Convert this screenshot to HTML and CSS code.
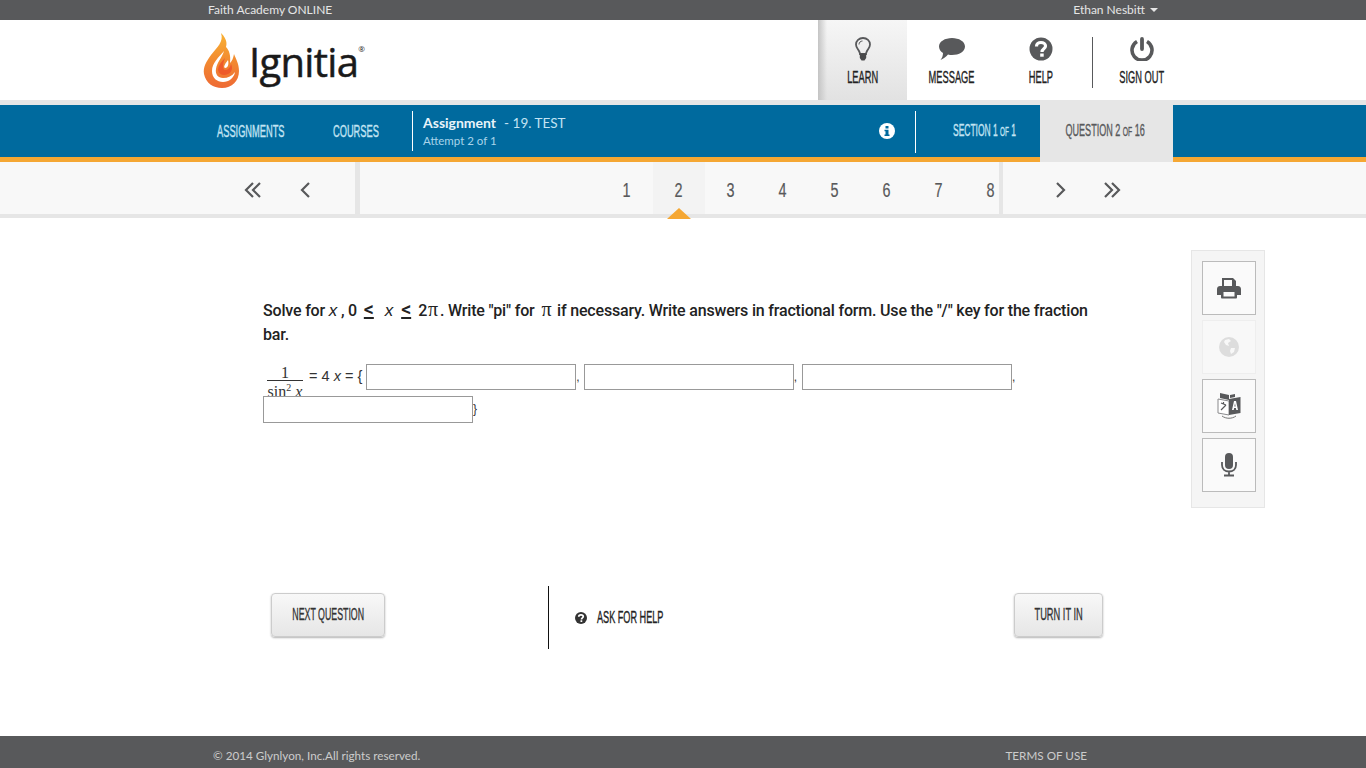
FILE: index.html
```html
<!DOCTYPE html>
<html lang="en">
<head>
<meta charset="utf-8">
<title>Ignitia</title>
<link rel="stylesheet" href="styles.css">
</head>
<body>
<div class="topbar">
  <span>Faith Academy ONLINE</span>
  <span class="user">Ethan Nesbitt <i class="caret"></i></span>
</div>
<header class="header">
  <div class="logo">
    <svg class="flame" width="37" height="56" viewBox="0 0 37 56">
      <defs>
        <linearGradient id="fl" x1="0" y1="0" x2="0" y2="1">
          <stop offset="0" stop-color="#f9b233"/>
          <stop offset=".5" stop-color="#f28a30"/>
          <stop offset="1" stop-color="#ee6a35"/>
        </linearGradient>
      </defs>
      <path fill="url(#fl)" d="M18 0C21 9 14 14 8 22C3 29 0 34 1 41C3 50 10 55 19 55C29 55 36 48 36 38C36 31 33 26 31 21C30 26 29 28 27 30C28 22 26 17 23 14C25 8 21 3 18 0Z"/>
      <path fill="#fff" d="M21 18C16 24 9 30 9 38C9 45 14 49 20 49C26 49 31 45 32 39C29 43 25 45 20 45C15 45 12 41 13 36C14 29 19 25 21 18Z"/>
      <path fill="#ee5a2b" d="M22 25C18 29 15 33 15 37C16 42 21 43 25 41C29 39 30 35 28 31C27 35 25 37 22 37C19 36 20 30 22 25Z"/>
      <path fill="#fff" d="M25 27C22 31 20 34 22 35C25 35 26 31 25 27Z"/>
    </svg>
    <span class="wordmark">Ignitia<sup>®</sup></span>
  </div>
  <nav class="mainnav">
    <a class="navitem active">
      <svg width="16" height="24" viewBox="0 0 16 24"><path fill="none" stroke="#58595b" stroke-width="1.800" d="M8 1C4 1 1 4 1 7.500C1 10.500 3 12 4 14C4.500 15 5 16 5 17H11C11 16 11.500 15 12 14C13 12 15 10.500 15 7.500C15 4 12 1 8 1Z"/><path fill="none" stroke="#58595b" d="M4 7.500C4 5.500 5.500 4 7.500 4"/><path fill="#4a4a4c" d="M4.800 16.500H11.200V21L9.500 23.500H6.500L4.800 21Z"/></svg>
      <span class="cn">LEARN</span>
    </a>
    <a class="navitem">
      <svg width="28" height="24" viewBox="0 0 28 24"><path fill="#58595b" d="M14 1C21 1 27 4.500 27 9.500C27 14.500 21 18 14 18C12.500 18 11.500 18 10 17.500C8 20 5 22 2.500 23C4 21 5 19 5 16C2.500 14.500 1 12 1 9.500C1 4.500 7 1 14 1Z"/></svg>
      <span class="cn">MESSAGE</span>
    </a>
    <a class="navitem">
      <svg width="24" height="24" viewBox="0 0 24 24"><circle cx="12" cy="12" r="11.500" fill="#58595b"/><path fill="none" stroke="#fff" stroke-width="3.200" d="M7.500 9.500C7.500 7 9.500 5.500 12 5.500C14.500 5.500 16.500 7 16.500 9C16.500 12 13 11.500 13 15"/><rect x="11.200" y="16.500" width="3.500" height="3.200" fill="#fff"/></svg>
      <span class="cn">HELP</span>
    </a>
    <a class="navitem signout">
      <svg width="24" height="24" viewBox="0 0 24 24"><path fill="none" stroke="#58595b" stroke-width="3.600" d="M7 4.500A10 10 0 1 0 17 4.500"/><path stroke="#58595b" stroke-width="3.800" stroke-linecap="round" d="M12 2V12"/></svg>
      <span class="cn">SIGN OUT</span>
    </a>
  </nav>
</header>
<div class="bluebar">
  <a class="bluelink first"><span class="cn left">ASSIGNMENTS</span></a>
  <a class="bluelink second"><span class="cn left">COURSES</span></a>
  <div class="assignment">
    <div class="a-title"><b>Assignment</b><span>- 19. TEST</span></div>
    <div class="a-sub">Attempt 2 of 1</div>
  </div>
  <svg class="infoicon" width="16" height="16" viewBox="0 0 16 16"><circle cx="8" cy="8" r="8" fill="#fff"/><rect x="6.500" y="3" width="3" height="2.500" fill="#006a9e"/><path fill="#006a9e" d="M5.500 6.800H9.500V11.500H10.500V13H5.500V11.500H6.500V8.300H5.500Z"/></svg>
  <div class="section"><span class="cn left">SECTION 1 <small>OF</small> 1</span></div>
  <div class="qtab"><span class="cn">QUESTION 2 <small>OF</small> 16</span></div>
</div>
<div class="pager">
  <div class="pager-left">
    <svg class="chev" width="18" height="16" viewBox="0 0 18 16"><path fill="none" stroke="#58595b" stroke-width="2.200" d="M9 1L2 8L9 15M16 1L9 8L16 15"/></svg>
    <svg class="chev" width="10" height="16" viewBox="0 0 10 16"><path fill="none" stroke="#58595b" stroke-width="2.200" d="M9 1L2 8L9 15"/></svg>
  </div>
  <div class="pager-nums">
    <a><span class="cn">1</span></a><a class="current"><span class="cn">2</span></a><a><span class="cn">3</span></a><a><span class="cn">4</span></a><a><span class="cn">5</span></a><a><span class="cn">6</span></a><a><span class="cn">7</span></a><a><span class="cn">8</span></a>
  </div>
  <div class="pager-right">
    <svg class="chev" width="10" height="16" viewBox="0 0 10 16"><path fill="none" stroke="#58595b" stroke-width="2.200" d="M1 1L8 8L1 15"/></svg>
    <svg class="chev" width="18" height="16" viewBox="0 0 18 16"><path fill="none" stroke="#58595b" stroke-width="2.200" d="M2 1L9 8L2 15M9 1L16 8L9 15"/></svg>
  </div>
</div>
<main class="main">
  <section class="question">
    <p class="prompt">Solve for <i class="mx">x</i> , 0 <u class="le">&lt;</u><i class="mx gap">x</i><u class="le">&lt;</u><span class="two">2</span><span class="m pi1">π</span>. Write "pi" for <span class="m pi2">π</span> if necessary. Write answers in fractional form. Use the "/" key for the fraction<br>bar.</p>
    <div class="answer">
      <span class="frac"><span class="num">1</span><span class="den">sin<sup>2</sup> <i>x</i></span></span>
      <span class="eq">= 4 <i>x</i> = {</span>
      <input class="box" type="text"><span class="sep">,</span>
      <input class="box" type="text"><span class="sep wide">,</span>
      <input class="box" type="text"><span class="sep">,</span>
      <input class="box last" type="text"><span class="sep">}</span>
    </div>
    <div class="actions">
      <a class="btn next"><span class="cn">NEXT QUESTION</span></a>
      <div class="helpwrap">
        <svg width="12" height="12" viewBox="0 0 24 24"><circle cx="12" cy="12" r="12" fill="#333"/><path fill="none" stroke="#fff" stroke-width="3.500" d="M7.500 9.500C7.500 7 9.500 5.500 12 5.500C14.500 5.500 16.500 7 16.500 9C16.500 12 13 11.500 13 15"/><rect x="11" y="16.500" width="3.500" height="3.500" fill="#fff"/></svg>
        <span class="cn left">ASK FOR HELP</span>
      </div>
      <a class="btn turnin"><span class="cn">TURN IT IN</span></a>
    </div>
  </section>
  <aside class="tools">
    <a class="tool">
      <svg width="24" height="22" viewBox="0 0 24 22"><path fill="#58595b" d="M5 1H16L19 4V9H5Z"/><path fill="#58595b" d="M3 9H21C22.500 9 24 10 24 12V18H20V20.500C20 21 19.500 21.500 19 21.500H5C4.500 21.500 4 21 4 20.500V18H0V12C0 10 1.500 9 3 9Z"/><rect x="7" y="3" width="8" height="6" fill="#fafafa"/><rect x="6.500" y="15" width="11" height="4.500" fill="#fafafa"/></svg>
    </a>
    <a class="tool off">
      <svg width="20" height="20" viewBox="0 0 20 20"><circle cx="10" cy="10" r="10" fill="#ddd"/><path fill="#f8f8f8" d="M6 3L10 2L12 4L9 6L10 9L7 8L5 5ZM12 11L16 11L15 15L12 17L11 14Z"/></svg>
    </a>
    <a class="tool">
      <svg width="24" height="28" viewBox="0 0 24 28"><path fill="#fff" stroke="#8a8a8c" d="M1 7L12 9V23L1 21Z"/><path fill="#58595b" d="M12 7L23.500 5V21L12 23Z"/><path fill="#58595b" d="M3 1L12 3V8L3 6Z"/><path fill="#58595b" d="M13 3L18 2V5L13 6Z"/><path fill="#fff" d="M15 18L17 9H19L21 18H19.300L18.900 16H17.100L16.700 18ZM17.400 14.600H18.600L18 11.200Z"/><path fill="none" stroke="#58595b" stroke-width="1.200" d="M4 11L9 13M6.500 10V12.500M4 18L9 13"/><path fill="none" stroke="#777" d="M5 24C9 27 15 27 19 24"/></svg>
    </a>
    <a class="tool">
      <svg width="16" height="24" viewBox="0 0 16 24"><rect x="4" y="0" width="8" height="16" rx="4" fill="#58595b"/><path fill="none" stroke="#58595b" stroke-width="1.800" d="M1 9V12C1 16 4 18.500 8 18.500C12 18.500 15 16 15 12V9M8 18.500V22"/><rect x="3" y="21.500" width="10" height="2" fill="#58595b"/></svg>
    </a>
  </aside>
</main>
<footer class="footer">
  <span>© 2014 Glynlyon, Inc.All rights reserved.</span>
  <span class="terms">TERMS OF USE</span>
</footer>
</body>
</html>
```
FILE: styles.css
```css
* { box-sizing: border-box; }
html, body { height: 100%; }
body {
  margin: 0;
  height: 768px;
  overflow: hidden;
  display: flex;
  flex-direction: column;
  background: #fff;
  font-family: "Lato", "Liberation Sans", sans-serif;
  color: #222;
}
.cn {
  display: inline-block;
  flex: none;
  white-space: nowrap;
  font-family: "Liberation Sans", sans-serif;
  font-weight: 400;
  font-size: 16px;
  line-height: 18px;
  -webkit-text-stroke: .35px currentColor;
  transform: scaleX(.58);
  transform-origin: center;
}
.cn.left { transform-origin: left; }
.cn small { font-size: 12px; }
.topbar {
  flex: none;
  height: 20px;
  background: #58595b;
  color: #e6e6e6;
  font-size: 12px;
  line-height: 20px;
  padding: 0 208px;
  display: flex;
  justify-content: space-between;
}
.caret {
  display: inline-block;
  width: 0;
  height: 0;
  margin-left: 2px;
  vertical-align: 2px;
  border: 4px solid transparent;
  border-top-color: #e6e6e6;
  border-bottom: 0;
}
.header {
  flex: none;
  height: 85px;
  display: flex;
  justify-content: space-between;
  border-bottom: 5px solid #e6e6e6;
  padding: 0 176px 0 203px;
}
.logo { display: flex; align-items: flex-start; padding-top: 13px; }
.wordmark {
  font-family: "Open Sans", sans-serif;
  font-size: 40px;
  line-height: 56px;
  margin: 1px 0 0 9px;
  letter-spacing: -.7px;
  color: #1a1a1a;
  -webkit-text-stroke: .5px #1a1a1a;
}
.wordmark sup {
  font-size: 8px;
  vertical-align: 25px;
  line-height: 0;
  letter-spacing: 0;
  margin-left: 0;
  -webkit-text-stroke: 0;
}
.mainnav { display: flex; }
.navitem {
  width: 89px;
  height: 80px;
  display: flex;
  flex-direction: column;
  align-items: center;
  padding-top: 17px;
  color: #222;
}
.navitem svg { height: 24px; flex: none; }
.navitem .cn { margin-top: 8px; }
.navitem.active {
  background:
    linear-gradient(90deg, #c4c4c4 0, rgba(238,238,238,0) 9px),
    linear-gradient(180deg, #f6f6f6 0, #e2e2e2 100%);
}
.navitem.signout { position: relative; width: 97px; margin-left: 8px; }
.navitem.signout::before {
  content: "";
  position: absolute;
  left: -1px;
  top: 17px;
  height: 51px;
  width: 1px;
  background: #58595b;
}
.bluebar {
  flex: none;
  height: 57px;
  background: #006a9e;
  border-bottom: 5px solid #f5a733;
  display: flex;
  align-items: flex-start;
  color: #c3e4f3;
  padding-left: 217px;
}
.bluelink { line-height: 18px; padding-top: 17px; }
.first { width: 116px; }
.second { width: 79px; }
.assignment {
  margin: 6px 0 0;
  padding-left: 10px;
  height: 40px;
  width: 467px;
  border-left: 1px solid #fff;
  font-size: 13.500px;
}
.a-title { line-height: 24px; }
.a-title b { color: #e8f4fa; margin-right: 8px; font-size: 14px; }
.a-sub { font-size: 11.500px; line-height: 12px; color: #a8d4ea; }
.infoicon { margin-top: 18px; flex: none; }
.section {
  width: 125px;
  flex: none;
  margin: 6px 0 0 20px;
  height: 42px;
  border-left: 1px solid #fff;
  padding: 9px 0 0 37px;
  white-space: nowrap;
}
.section .cn { transform: scaleX(.53); }
.qtab {
  width: 133px;
  flex: none;
  height: 57px;
  background: #e6e6e6;
  color: #58595b;
  display: flex;
  justify-content: center;
  padding: 17px 3px 0 0;
}
.qtab .cn { transform: scaleX(.565); }
.pager {
  flex: none;
  height: 56px;
  background: #f8f8f8;
  border-bottom: 4px solid #e6e6e6;
  display: flex;
  color: #58595b;
}
.pager-left {
  width: 355px;
  display: flex;
  align-items: center;
  justify-content: flex-end;
  gap: 38px;
  padding: 4px 45px 0 0;
}
.pager-nums {
  width: 639px;
  display: flex;
  justify-content: flex-end;
  margin-left: 5px;
  background: #f8f8f8;
  box-shadow: -5px 0 0 #e6e6e6, 4px 0 0 #e6e6e6;
  position: relative;
}
.pager-nums a {
  flex: none;
  width: 52px;
  height: 52px;
  display: flex;
  justify-content: center;
  align-items: center;
  padding-top: 4px;
}
.pager-nums .cn { font-size: 20px; line-height: 24px; transform: scaleX(.72); -webkit-text-stroke: .2px currentColor; }
.pager-nums a:last-child { margin-right: -18px; }
.pager-nums a.current { background: #f3f3f3; position: relative; }
.pager-nums a.current::after {
  content: "";
  position: absolute;
  left: 14px;
  bottom: -5px;
  border: 12px solid transparent;
  border-top: 0;
  border-bottom: 11px solid #f5a733;
}
.pager-right {
  margin-left: 4px;
  display: flex;
  align-items: center;
  gap: 37px;
  padding: 4px 0 0 53px;
}
.main {
  flex: 1;
  position: relative;
  padding: 0 0 0 263px;
}
.question { width: 840px; padding-top: 81px; }
.prompt {
  margin: 0;
  font-family: "Roboto", sans-serif;
  font-size: 16px;
  line-height: 24px;
  font-weight: 500;
  letter-spacing: -.18px;
  color: #222;
}
.m { font-family: "Liberation Serif", serif; font-weight: 400; font-size: 20px; line-height: 0; }
.pi1 { margin: 0 2px 0 1px; }
.pi2 { margin: 0 2px 0 3px; }
.mx { font-family: "Liberation Sans", sans-serif; font-weight: 400; font-size: 17px; line-height: 0; }
.le { font-size: 20px; line-height: 0; margin-left: 3px; }
.gap { margin: 0 5px 0 11px; }
.two { margin-left: 7px; }
.answer {
  margin-top: 14px;
  font-family: "Liberation Sans", sans-serif;
  font-size: 14.500px;
  color: #333;
  line-height: 31px;
}
.frac {
  display: inline-flex;
  flex-direction: column;
  align-items: center;
  vertical-align: top;
  width: 36px;
  height: 32px;
  margin: 0 2px 0 4px;
  font-family: "Liberation Serif", serif;
  font-size: 16px;
  line-height: 15px;
}
.num { border-bottom: 1px solid #333; width: 100%; text-align: center; height: 21px; padding-top: 4px; }
.den { white-space: nowrap; margin-top: 3px; }
.den sup { font-size: 10px; line-height: 0; }
.box {
  width: 210px;
  height: 26px;
  margin: 0;
  padding: 0;
  vertical-align: middle;
  border: 1px solid #999;
  background: #fff;
  position: relative;
}
.box.last { height: 27px; }
.sep { font-size: 12px; }
.sep.wide { margin-right: 1px; }
.actions {
  display: flex;
  position: relative;
  margin-top: 161px;
  padding: 7px 0 0 8px;
  height: 63px;
  align-items: flex-start;
}
.btn {
  flex: none;
  width: 114px;
  height: 44px;
  border: 1px solid #ccc;
  border-radius: 4px;
  background: linear-gradient(#f8f8f8, #e6e6e6);
  box-shadow: 0 1px 2px rgba(0,0,0,.3);
  display: flex;
  justify-content: center;
  align-items: center;
  color: #333;
}
.next .cn { transform: scaleX(.55); }
.turnin { width: 89px; margin-left: auto; }
.helpwrap {
  margin: -7px 0 0 163px;
  height: 63px;
  width: 200px;
  flex: none;
  border-left: 1px solid #111;
  padding-left: 26px;
  display: flex;
  align-items: center;
  gap: 10px;
  color: #222;
}
.helpwrap .cn { transform: scaleX(.57); }
.tools {
  position: absolute;
  left: 1191px;
  top: 32px;
  width: 74px;
  height: 258px;
  background: #f5f5f5;
  border: 1px solid #e6e6e6;
  padding: 10px;
  display: flex;
  flex-direction: column;
  gap: 5px;
}
.tool {
  width: 54px;
  height: 54px;
  flex: none;
  border: 1px solid #bbb;
  background: #fafafa;
  display: flex;
  align-items: center;
  justify-content: center;
}
.tool.off { border-color: #eee; background: #f8f8f8; }
.footer {
  flex: none;
  height: 32px;
  background: #58595b;
  color: #ccc;
  font-size: 11.700px;
  line-height: 38px;
  padding: 0 279px 0 213px;
  display: flex;
  justify-content: space-between;
}
```
